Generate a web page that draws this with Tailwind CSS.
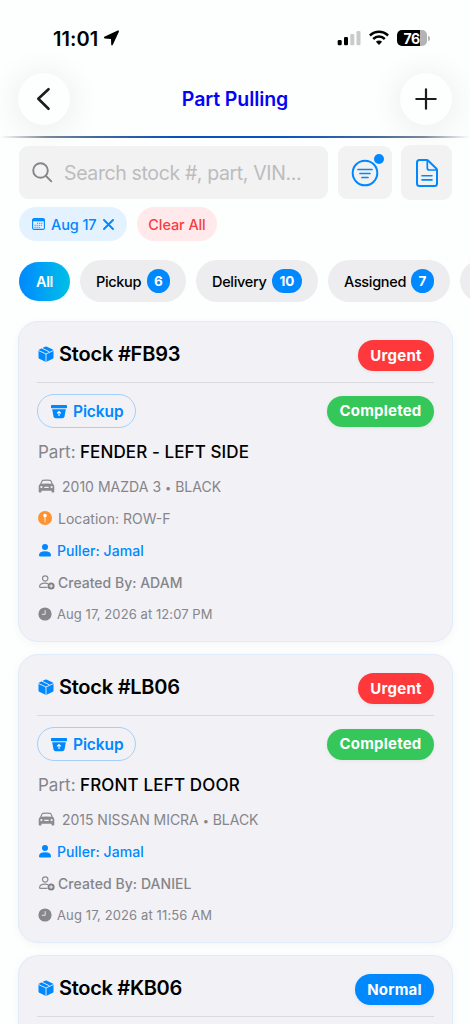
<!DOCTYPE html>
<html lang="en">
<head>
<meta charset="utf-8">
<title>Part Pulling</title>
<script src="https://cdn.jsdelivr.net/npm/@tailwindcss/browser@4"></script>
</head>
<body class="w-[470px] h-[1024px] overflow-hidden bg-[#fdfefe] font-['Inter','Liberation_Sans',sans-serif] text-black whitespace-nowrap">
<svg class="hidden">
  <symbol id="box" viewBox="0 0 16 16"><path fill="#0088ff" d="M8 .5Q8.500.5 9 .8L14.700 3.400Q15.500 3.800 15.500 4.700V11.600Q15.500 12.300 14.800 12.700L9 15.400Q8 15.900 7 15.400L1.200 12.700Q.5 12.300.5 11.600V4.700Q.5 3.800 1.300 3.400L7 .8Q7.500.5 8 .5Z"/><path d="M.5 4.500 8 8 15.500 4.500M8 8V15.700M3.900 2.200 11.400 5.800" fill="none" stroke="#f1f1f6" stroke-width=".9"/></symbol>
  <symbol id="bin" viewBox="0 0 16 14"><rect width="16" height="3.200" rx=".6" fill="#0088ff"/><path fill="#0088ff" d="M1.200 4.200H14.800L13.500 11.500Q13.100 13.300 11.300 13.300H4.700Q2.900 13.300 2.500 11.500Z"/><path d="M8 11V6.700M6.100 8.300 8 6.500 9.900 8.300" fill="none" stroke="#fff" stroke-width="1.100"/></symbol>
  <symbol id="car" viewBox="0 0 17 14"><path fill="#8b8b90" fill-rule="evenodd" d="M4.700.8Q8.500.2 12.300.8 13.200 1 13.600 1.900L14.900 4.900Q16.300 5.800 16.300 7.500V12.800Q16.300 13.600 15.500 13.600H14.300Q13.500 13.600 13.500 12.800V11.700H3.500V12.800Q3.500 13.600 2.700 13.600H1.500Q.7 13.600.7 12.800V7.500Q.7 5.800 2.100 4.900L3.400 1.900Q3.800 1 4.700.8ZM4.900 2.100Q4.600 2.200 4.400 2.600L3.500 4.800Q8.500 4.200 13.500 4.800L12.600 2.600Q12.400 2.200 12.100 2.100 8.500 1.600 4.900 2.100ZM3.400 7A1.100 1.100 0 1 0 3.400 9.200 1.100 1.100 0 1 0 3.400 7ZM13.600 7A1.100 1.100 0 1 0 13.600 9.200 1.100 1.100 0 1 0 13.600 7ZM6.300 7.700V9.100H10.700V7.700Z"/></symbol>
  <symbol id="pin" viewBox="0 0 14 14"><circle cx="7" cy="7" r="7" fill="#ff9230"/><circle cx="7" cy="4.600" r="1.800" fill="#fff"/><path d="M6.500 6.300H7.500L7.300 11.200 7 11.800 6.700 11.200Z" fill="#fff"/></symbol>
  <symbol id="person" viewBox="0 0 12 13"><circle cx="6" cy="3.100" r="3" fill="#0088ff"/><path d="M0 11.300Q0 7.300 6 7.300T12 11.300Q12 12.600 10.800 12.600H1.200Q0 12.600 0 11.300Z" fill="#0088ff"/></symbol>
  <symbol id="personadd" viewBox="0 0 16 15"><g fill="none" stroke="#8b8b90" stroke-width="1.200"><circle cx="6.200" cy="3.500" r="2.700"/><path d="M8.500 12.400H1.200Q.5 12.400.6 11.500.7 8.200 6.200 8.200 8 8.200 9.200 8.700"/></g><circle cx="12.100" cy="11" r="3.500" fill="#808085"/><path d="M10.300 11H13.900M12.100 9.200V12.800" stroke="#f1f1f6"/></symbol>
  <symbol id="clock" viewBox="0 0 14 14"><circle cx="7" cy="7" r="6.600" fill="#86868b"/><path d="M7.200 3.200V7.300H3.900" fill="none" stroke="#e5e5ea"/></symbol>
</svg>
<div class="flex flex-col w-[470px] h-[1024px] overflow-hidden">
  <header class="flex flex-col h-[138px]">
    <div class="flex items-center h-[72px] pt-[4px] pl-[53px]">
      <span class="pt-[2px] text-[20px] font-semibold tracking-[0.050px] w-[50px]">11:01</span>
      <svg class="w-[17px] h-[17px]" viewBox="0 0 17 17"><path d="M1.300 6.700 14.700.6Q16.300.2 15.900 1.700L9.700 15Q8.600 16 8.200 14.500L8 9 1.800 8.400Q.1 8 1.300 6.700Z"/></svg>
      <svg class="w-[24px] h-[16px] ml-[217px]" viewBox="0 0 24 16"><rect x=".7" y="10" width="4" height="5.200" rx="1.200"/><rect x="7" y="7" width="4" height="8.200" rx="1.200"/><g fill="#cacaca"><rect x="13.300" y="4" width="4" height="11.200" rx="1.200"/><rect x="19.500" y="1" width="4" height="14.200" rx="1.200"/></g></svg>
      <svg class="w-[20px] h-[16px] ml-[8px]" viewBox="0 0 20 16"><g fill="none" stroke="#000" stroke-width="2.500"><path d="M.9 5.500Q4.900 1.800 10 1.800T19.100 5.500"/><path d="M4.200 9Q6.700 6.600 10 6.600T15.800 9"/></g><path d="M6.900 11.700Q10 9.300 13.100 11.700L10 14.900Z"/></svg>
      <div class="flex items-center ml-[8px]">
        <div class="flex items-center justify-center w-[30px] h-[16px] rounded-[5px] bg-[linear-gradient(90deg,#000_76%,#b3b3b3_76%)] text-white text-[14px] font-bold tracking-[-0.500px] pr-px">76</div>
        <div class="w-[2px] h-[5px] ml-px rounded-r-full bg-[#b3b3b3]"></div>
      </div>
    </div>
    <div class="flex items-center justify-between h-[53px] px-[18px] ">
      <div class="flex items-center justify-center size-[52px] rounded-full bg-[#fdfefe] shadow-[0_3px_30px_6px_rgba(0,0,0,0.060)]"><svg class="size-[26px]" viewBox="0 0 26 26"><path d="M17.500 3.200 7.300 12.800 17.500 22.800" fill="none" stroke="#1c1c1c" stroke-width="2.600" stroke-linecap="round" stroke-linejoin="round"/></svg></div>
      <h1 class="pt-[2px] text-[19.500px] font-semibold tracking-[-0.100px] text-[#0303f5]">Part Pulling</h1>
      <div class="flex items-center justify-center size-[52px] rounded-full bg-[#fdfefe] shadow-[0_3px_30px_6px_rgba(0,0,0,0.060)]"><svg class="size-[22px]" viewBox="0 0 22 22"><path d="M11 1.300V20.700M1.300 11H20.700" fill="none" stroke="#1c1c1c" stroke-width="2.200" stroke-linecap="round"/></svg></div>
    </div>
    <div class="h-[2px] mt-[11px] bg-[linear-gradient(90deg,transparent_0%,#7d8797_10%,#4569a0_20%,#0a4fc0_38%,#0650c6_58%,#4569a0_80%,#7d8797_90%,transparent_100%)]"></div>
  </header>

  <div class="flex items-center h-[55px] mt-[7px] pl-[19px]">
    <div class="flex items-center w-[309px] h-[53px] rounded-[9px] bg-[#f2f2f2] pl-[13px]">
      <svg class="size-[21px]" viewBox="0 0 21 21"><g fill="none" stroke="#85858a" stroke-width="1.900" stroke-linecap="round"><circle cx="8.500" cy="8.500" r="7.300"/><path d="M14 14 19.300 19.300"/></g></svg>
      <span class="pt-[2px] ml-[11px] text-[19.500px] tracking-[-0.370px] text-[#bcbcbe]">Search stock #, part, VIN...</span>
    </div>
    <div class="relative flex items-center justify-center w-[54px] h-[53px] ml-[10px] rounded-[9px] bg-[#f2f2f2]">
      <svg class="size-[28px]" viewBox="0 0 28 28"><g fill="none" stroke="#0088ff" stroke-width="2" stroke-linecap="round"><circle cx="14" cy="14" r="12.300"/><path d="M7 10.500H21M9 14.500H19M11 18.500H17" stroke-width="1.700"/></g></svg>
      <span class="absolute left-[36px] top-[8px] size-[10px] rounded-full bg-[#0088ff]"></span>
    </div>
    <div class="flex items-center justify-center w-[51px] h-[55px] ml-[9px] rounded-[9px] bg-[#f2f2f2]">
      <svg class="w-[22px] h-[28px]" viewBox="0 0 22 28"><g fill="none" stroke="#0088ff" stroke-width="2" stroke-linejoin="round" stroke-linecap="round"><path d="M3.500 1H10.800Q11.500 1 12 1.500L20.500 9.700Q21 10.200 21 11V24.500Q21 27 18.500 27H3.500Q1 27 1 24.500V3.500Q1 1 3.500 1Z"/><path d="M11.300 1.500V9Q11.300 11 13.300 11H20.500" stroke-width="1.700"/><path d="M6 16.700H16M6 20.900H16" stroke-width="1.600"/></g></svg>
    </div>
  </div>

  <div class="flex h-[34px] mt-[7px] ml-[19px] gap-[10px] text-[14.500px] font-medium">
    <div class="flex items-center w-[108px] rounded-full bg-[#e4f2ff] pl-[13px] text-[#0088ff]">
      <svg class="w-[13px] h-[12px]" viewBox="0 0 13 12"><rect x=".6" y=".6" width="11.800" height="10.800" rx="1.500" fill="none" stroke="#0088ff" stroke-width="1.100"/><path d="M.5 2.200H12.500" stroke="#0088ff" stroke-width="2.200"/><path d="M5 5.300H11M2.500 7.300H11M2.500 9.300H9" stroke="#0088ff" stroke-width=".9" stroke-dasharray="1.200 .9"/></svg>
      <span class="pt-px ml-[6px] w-[52px] tracking-[-0.100px]">Aug 17</span>
      <svg class="size-[11px]" viewBox="0 0 11 11"><path d="M1 1 10 10M10 1 1 10" stroke="#0088ff" stroke-width="1.900" stroke-linecap="round"/></svg>
    </div>
    <div class="flex items-center justify-center w-[80px] rounded-full bg-[#ffe9eb] pt-px tracking-[-0.100px] text-[#fa3b40]">Clear All</div>
  </div>

  <nav class="flex items-center h-[42px] mt-[19px] ml-[19px] gap-[10px] overflow-hidden text-[14.500px] font-medium tracking-[-0.330px]">
    <div class="flex shrink-0 items-center justify-center w-[51px] h-[39px] rounded-full bg-linear-to-r from-[#0088ff] to-[#00bfe6] pt-px text-white font-semibold">All</div>
    <div class="flex shrink-0 items-center justify-between w-[106px] h-[42px] rounded-full bg-[#ededef] pl-4 pr-4"><span class="pt-px">Pickup</span><span class="flex items-center justify-center w-[23px] h-[24px] rounded-full bg-[#0088ff] text-white text-[13.500px] font-bold tracking-normal">6</span></div>
    <div class="flex shrink-0 items-center justify-between w-[122px] h-[42px] rounded-full bg-[#ededef] pl-4 pr-4"><span class="pt-px">Delivery</span><span class="flex items-center justify-center w-[30px] h-[24px] rounded-full bg-[#0088ff] text-white text-[13.500px] font-bold tracking-normal">10</span></div>
    <div class="flex shrink-0 items-center justify-between w-[122px] h-[42px] rounded-full bg-[#ededef] pl-4 pr-4"><span class="pt-px">Assigned</span><span class="flex items-center justify-center w-[23px] h-[24px] rounded-full bg-[#0088ff] text-white text-[13.500px] font-bold tracking-normal">7</span></div>
    <div class="shrink-0 w-[42px] h-[42px] rounded-full bg-[#ededef]"></div>
  </nav>

  <main class="flex flex-col gap-[12px] mt-[19px] ml-[18px] w-[435px] h-[703px] overflow-visible">
    <article class="flex flex-col shrink-0 h-[321px] border border-[#e0ecfa] rounded-[20px] bg-[#f1f1f6] pt-[18px] px-[18px] shadow-[0_2px_10px_rgba(0,0,0,0.040)]">
      <div class="flex items-center h-[31px]"><svg class="size-[16px] ml-px mb-[3px]"><use href="#box"/></svg><h2 class="mb-[3px] ml-[5px] text-[20px] font-semibold tracking-[-0.200px]">Stock #FB93</h2><span class="ml-auto flex items-center justify-center w-[76px] h-[31px] rounded-full bg-[#ff383c] pt-px text-white text-[15px] font-bold tracking-[0.250px] shadow-[0_1px_4px_rgba(0,0,0,0.060)]">Urgent</span></div>
      <div class="h-px mt-[11px] bg-[#d9d9de]"></div>
      <div class="flex items-center h-[34px] mt-[11px]"><span class="flex items-center w-[99px] h-[34px] border border-[#a5d0fb] rounded-full pl-[13px] text-[#0088ff] text-[15.500px] font-semibold"><svg class="w-[16px] h-[14px] mr-[6px] mt-px"><use href="#bin"/></svg><span class="pt-px tracking-[-0.100px]">Pickup</span></span><span class="ml-auto flex items-center justify-center w-[107px] h-[31px] rounded-full bg-[#35c759] pt-px text-white text-[15px] font-bold tracking-[0.200px] shadow-[0_1px_4px_rgba(0,0,0,0.060)]">Completed</span></div>
      <div class="flex items-center h-[26px] mt-[11px] pl-px pt-[2px] text-[17px]"><span class="w-[42px] text-[#85858a]">Part:</span><span class="font-medium tracking-[0.100px]">FENDER - LEFT SIDE</span></div>
      <div class="mt-[5px] text-[14px] text-[#85858a]">
        <div class="flex items-center h-[32px]"><svg class="w-[17px] h-[14px] ml-px mr-[7px]"><use href="#car"/></svg><span class="tracking-[0.020px]">2010 MAZDA 3 <span class="text-[11px]">•</span> BLACK</span></div>
        <div class="flex items-center h-[32px]"><svg class="size-[14px] ml-px mr-[6px]"><use href="#pin"/></svg><span>Location: ROW-F</span></div>
        <div class="flex items-center h-[32px] text-[#0088ff] font-medium"><svg class="w-[12px] h-[13px] ml-[2px] mr-[6px]"><use href="#person"/></svg><span class="tracking-[0.060px]">Puller: Jamal</span></div>
        <div class="flex items-center h-[32px] font-medium"><svg class="w-[16px] h-[15px] ml-[2px] mr-[3px]"><use href="#personadd"/></svg><span>Created By: ADAM</span></div>
        <div class="flex items-center h-[32px] text-[13px]"><svg class="size-[14px] ml-px mr-[5px]"><use href="#clock"/></svg><span class="pt-px tracking-[0.080px]">Aug 17, 2026 at 12:07 PM</span></div>
      </div>
    </article>
    <article class="flex flex-col shrink-0 h-[289px] border border-[#e0ecfa] rounded-[20px] bg-[#f1f1f6] pt-[18px] px-[18px] shadow-[0_2px_10px_rgba(0,0,0,0.040)]">
      <div class="flex items-center h-[31px]"><svg class="size-[16px] ml-px mb-[3px]"><use href="#box"/></svg><h2 class="mb-[3px] ml-[5px] text-[20px] font-semibold tracking-[-0.250px]">Stock #LB06</h2><span class="ml-auto flex items-center justify-center w-[76px] h-[31px] rounded-full bg-[#ff383c] pt-px text-white text-[15px] font-bold tracking-[0.250px] shadow-[0_1px_4px_rgba(0,0,0,0.060)]">Urgent</span></div>
      <div class="h-px mt-[11px] bg-[#d9d9de]"></div>
      <div class="flex items-center h-[34px] mt-[11px]"><span class="flex items-center w-[99px] h-[34px] border border-[#a5d0fb] rounded-full pl-[13px] text-[#0088ff] text-[15.500px] font-semibold"><svg class="w-[16px] h-[14px] mr-[6px] mt-px"><use href="#bin"/></svg><span class="pt-px tracking-[-0.100px]">Pickup</span></span><span class="ml-auto flex items-center justify-center w-[107px] h-[31px] rounded-full bg-[#35c759] pt-px text-white text-[15px] font-bold tracking-[0.200px] shadow-[0_1px_4px_rgba(0,0,0,0.060)]">Completed</span></div>
      <div class="flex items-center h-[26px] mt-[11px] pl-px pt-[2px] text-[17px]"><span class="w-[42px] text-[#85858a]">Part:</span><span class="font-medium tracking-[0.160px]">FRONT LEFT DOOR</span></div>
      <div class="mt-[5px] text-[14px] text-[#85858a]">
        <div class="flex items-center h-[32px]"><svg class="w-[17px] h-[14px] ml-px mr-[7px]"><use href="#car"/></svg><span class="tracking-[-0.030px]">2015 NISSAN MICRA <span class="text-[11px]">•</span> BLACK</span></div>
        <div class="flex items-center h-[32px] text-[#0088ff] font-medium"><svg class="w-[12px] h-[13px] ml-[2px] mr-[6px]"><use href="#person"/></svg><span class="tracking-[0.060px]">Puller: Jamal</span></div>
        <div class="flex items-center h-[32px] font-medium"><svg class="w-[16px] h-[15px] ml-[2px] mr-[3px]"><use href="#personadd"/></svg><span class="tracking-[0.060px]">Created By: DANIEL</span></div>
        <div class="flex items-center h-[32px] text-[13px]"><svg class="size-[14px] ml-px mr-[5px]"><use href="#clock"/></svg><span class="pt-px tracking-[0.120px]">Aug 17, 2026 at 11:56 AM</span></div>
      </div>
    </article>
    <article class="flex flex-col shrink-0 h-[69px] border border-b-0 border-[#e0ecfa] rounded-t-[20px] bg-[#f1f1f6] pt-[18px] px-[18px] shadow-[0_2px_10px_rgba(0,0,0,0.040)]">
      <div class="flex shrink-0 items-center h-[31px]"><svg class="size-[16px] ml-px mb-[3px]"><use href="#box"/></svg><h2 class="mb-[3px] ml-[5px] text-[20px] font-semibold tracking-[-0.300px]">Stock #KB06</h2><span class="ml-auto flex items-center justify-center w-[79px] h-[31px] rounded-full bg-[#0088ff] pt-px text-white text-[15px] font-bold tracking-[0.200px] shadow-[0_1px_4px_rgba(0,0,0,0.060)]">Normal</span></div>
      <div class="h-px shrink-0 mt-[11px] bg-[#d9d9de]"></div>
    </article>
  </main>
</div>
</body>
</html>
